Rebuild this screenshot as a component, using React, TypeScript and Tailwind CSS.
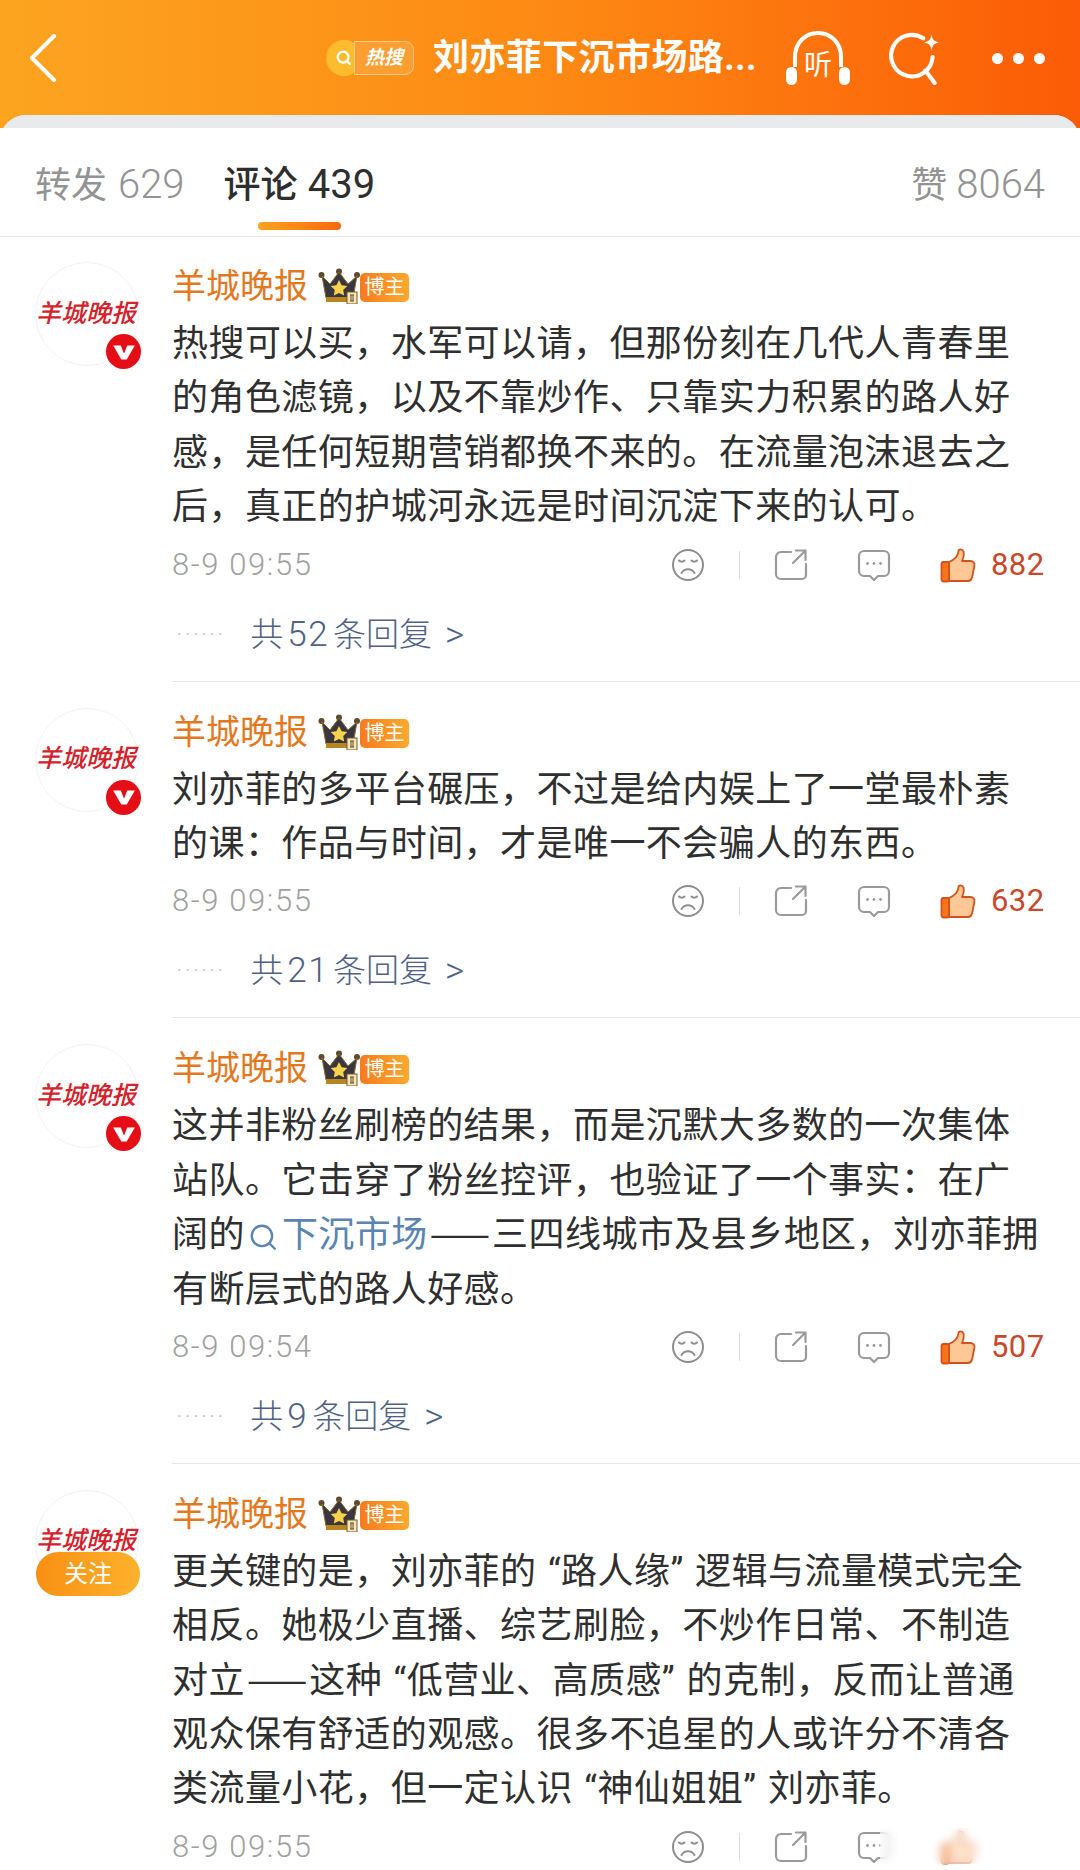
const FONT = "font-['Roboto','Noto_Sans_CJK_SC',sans-serif]";

type CommentData = {
  lines: React.ReactNode[];
  time: string;
  likes: string;
  replies?: string;
  follow?: boolean;
};

function SearchLink({ text }: { text: string }) {
  return (
    <span className="text-[#5b84b1]">
      <svg viewBox="0 0 28 28" className="inline-block w-[30px] h-[30px] ml-[3px] mr-[4px] mb-[2px] align-middle" fill="none" stroke="#5b84b1" strokeWidth="2.2" strokeLinecap="round">
        <circle cx="13" cy="13" r="9.5" />
        <path d="M20 20l5 5" />
      </svg>
      {text}
    </span>
  );
}

function Dash() {
  return <span className="font-['Noto_Sans_CJK_SC'] tracking-normal leading-none mx-[2px]">——</span>;
}

const comments: CommentData[] = [
  {
    lines: [
      "热搜可以买，水军可以请，但那份刻在几代人青春里",
      "的角色滤镜，以及不靠炒作、只靠实力积累的路人好",
      "感，是任何短期营销都换不来的。在流量泡沫退去之",
      "后，真正的护城河永远是时间沉淀下来的认可。",
    ],
    time: "8-9 09:55",
    likes: "882",
    replies: "52",
  },
  {
    lines: [
      "刘亦菲的多平台碾压，不过是给内娱上了一堂最朴素",
      "的课：作品与时间，才是唯一不会骗人的东西。",
    ],
    time: "8-9 09:55",
    likes: "632",
    replies: "21",
  },
  {
    lines: [
      "这并非粉丝刷榜的结果，而是沉默大多数的一次集体",
      "站队。它击穿了粉丝控评，也验证了一个事实：在广",
      <>
        阔的<SearchLink text="下沉市场" /><Dash />三四线城市及县乡地区，刘亦菲拥
      </>,
      "有断层式的路人好感。",
    ],
    time: "8-9 09:54",
    likes: "507",
    replies: "9",
  },
  {
    lines: [
      "更关键的是，刘亦菲的 “路人缘” 逻辑与流量模式完全",
      "相反。她极少直播、综艺刷脸，不炒作日常、不制造",
      <>
        对立<Dash />这种 “低营业、高质感” 的克制，反而让普通
      </>,
      "观众保有舒适的观感。很多不追星的人或许分不清各",
      "类流量小花，但一定认识 “神仙姐姐” 刘亦菲。",
    ],
    time: "8-9 09:55",
    likes: "",
    follow: true,
  },
];

function Avatar({ follow }: { follow?: boolean }) {
  return (
    <div className="relative w-[104px] h-[104px] shrink-0 rounded-full border border-[#f2f2f2] flex items-center justify-center">
      <span className="text-[#d3222c] text-[25px] leading-none font-medium italic whitespace-nowrap -mt-[2px] -ml-[2px]">
        羊城晚报
      </span>
      {follow ? (
        <div className="absolute left-0 top-[61px] w-[104px] h-[44px] rounded-full bg-gradient-to-r from-[#f98f12] to-[#fcb22c] text-white text-[24px] leading-[44px] text-center">
          关注
        </div>
      ) : (
        <div className="absolute right-[-3px] bottom-[-4px] w-[35px] h-[35px] rounded-full bg-[#e60e16] flex items-center justify-center">
          <svg viewBox="0 0 24 24" className="w-[26px] h-[26px]" fill="#fff">
            <path d="M2 6h7l3 7.500L15 6h7l-7.500 13h-5z" />
          </svg>
        </div>
      )}
    </div>
  );
}

function Crown() {
  return (
    <svg viewBox="0 0 44 36" className="w-[44px] h-[36px] shrink-0">
      <circle cx="3.5" cy="7" r="3" fill="#5e4a2c" />
      <circle cx="21" cy="3.5" r="3" fill="#5e4a2c" />
      <circle cx="39" cy="7" r="3" fill="#5e4a2c" />
      <path d="M4 8l8 8 9-12 9 12 9-8-4 22H8z" fill="#3a3640" stroke="#8a6a2a" strokeWidth="1" />
      <rect x="8" y="29" width="28" height="5" fill="#b9851f" />
      <path d="M21 12l2.6 5.2 5.7.8-4.1 4 1 5.6-5.2-2.7-5.2 2.7 1-5.6-4.1-4 5.7-.8z" fill="#f7d24b" />
      <rect x="29" y="24" width="10" height="12" fill="#f3e6c0" stroke="#7a5a1c" />
      <path d="M32 27h4M32 33h4M33 27v6M35 27v6" stroke="#6b4c16" strokeWidth="1" />
    </svg>
  );
}

function NameRow() {
  return (
    <div className="flex items-center h-[36px]">
      <span className="text-[34px] leading-[36px] text-[#e3791f] whitespace-nowrap">羊城晚报</span>
      <div className="flex items-center ml-[10px]">
        <Crown />
        <span className="-ml-[2px] mt-[3px] w-[49px] h-[29px] rounded-[5px] bg-gradient-to-r from-[#f77b1d] to-[#fba92e] text-white text-[20px] leading-[29px] text-center">
          博主
        </span>
      </div>
    </div>
  );
}

function SadIcon() {
  return (
    <svg viewBox="0 0 34 34" className="w-[34px] h-[34px]" fill="none" stroke="#8e8e8e" strokeWidth="2" strokeLinecap="round">
      <circle cx="17" cy="17" r="15" />
      <path d="M8 12.5c1.5 1.5 4 1.5 5.5 0M20.5 12.5c1.5 1.5 4 1.5 5.5 0M10.5 25c3-5 10-5 13 0" />
    </svg>
  );
}

function ShareIcon() {
  return (
    <svg viewBox="0 0 34 34" className="w-[34px] h-[34px]" fill="none" stroke="#9a9a9a" strokeWidth="2.2" strokeLinecap="round" strokeLinejoin="round">
      <path d="M17 4H7a5 5 0 0 0-5 5v17a5 5 0 0 0 5 5h21a4 4 0 0 0 4-4V16" />
      <path d="M19 15L31 3M22 2.5h9.5V12" />
    </svg>
  );
}

function ChatIcon() {
  return (
    <svg viewBox="0 0 34 34" className="w-[34px] h-[34px]" fill="none" stroke="#9a9a9a" strokeWidth="2.2" strokeLinejoin="round">
      <path d="M7 3h20a5 5 0 0 1 5 5v15a5 5 0 0 1-5 5h-6l-4 4-4-4H7a5 5 0 0 1-5-5V8a5 5 0 0 1 5-5z" />
      <circle cx="10.5" cy="15.5" r="1.4" fill="#9a9a9a" stroke="none" />
      <circle cx="17" cy="15.5" r="1.4" fill="#9a9a9a" stroke="none" />
      <circle cx="23.5" cy="15.5" r="1.4" fill="#9a9a9a" stroke="none" />
    </svg>
  );
}

function ThumbIcon() {
  return (
    <svg viewBox="0 0 36 36" className="w-[36px] h-[36px]" strokeLinejoin="round">
      <path d="M9 15c5-2 9-6 9.500-11 .2-2 4-2.500 5 .5.8 3-.2 6.500-1.500 9.500h8.500c2.500 0 4.500 2 4 4.500l-2.500 12c-.5 2.200-2 3.500-4 3.500H9z" fill="#fdc796" stroke="#d4511c" strokeWidth="1.800" />
      <rect x="1.500" y="15" width="7.500" height="19.500" rx="2" fill="#f7761a" stroke="#d4511c" strokeWidth="1.800" />
    </svg>
  );
}

function ActionRow({ time, likes }: { time: string; likes: string }) {
  return (
    <div className="flex items-center h-[36px] mt-[12px] pr-[35px]">
      <span className="text-[31px] leading-[36px] font-light text-[#a0a0a0] tracking-[1.6px]">{time}</span>
      <div className="ml-auto flex items-center">
        <SadIcon />
        <span className="w-px h-[28px] bg-[#dcdcdc] ml-[34px] mr-[34px]" />
        <ShareIcon />
        <span className="ml-[49px]"><ChatIcon /></span>
        <span className="ml-[49px]"><ThumbIcon /></span>
        <span className="ml-[15px] min-w-[54px] text-[31px] leading-[36px] text-[#c8482c] tracking-[0.4px]">{likes}</span>
      </div>
    </div>
  );
}

function Comment({ data, first }: { data: CommentData; first: boolean }) {
  return (
    <div className={`flex pl-[35px] ${first ? "pt-[25px]" : "pt-[26px]"}`}>
      <Avatar follow={data.follow} />
      <div className="ml-[33px] flex-1 min-w-0">
        <div className="pt-[6px]">
          <NameRow />
        </div>
        <div className="mt-[13px] text-[36px] leading-[54.4px] text-[#2f2f2f] tracking-[0.45px] [word-spacing:2px] whitespace-nowrap">
          {data.lines.map((line, i) => (
            <div key={i} className="h-[54.4px]">{line}</div>
          ))}
        </div>
        <ActionRow time={data.time} likes={data.likes} />
        {data.replies && (
          <>
            <div className="flex items-center h-[40px] mt-[32px]">
              <span className="text-[18px] leading-none tracking-[3.5px] text-[#c8c8c8] ml-[5px]">······</span>
              <span className="ml-[24px] flex items-center text-[33px] leading-[40px] text-[#4f6285] font-light">
                共<span className="mx-[4px] text-[35px] tracking-[1.5px]">{data.replies}</span>条回复<span className="ml-[13px] text-[37px]">&gt;</span>
              </span>
            </div>
            <div className="mt-[26px] h-px bg-[#e8e8e8]" />
          </>
        )}
      </div>
    </div>
  );
}

function Header() {
  return (
    <div className="bg-gradient-to-r from-[#fca420] via-[#fd8a14] to-[#fb5b06] h-[128px]">
      <div className="flex items-center h-[115px] pl-[29px] pr-[35px]">
        <svg viewBox="0 0 28 48" className="w-[28px] h-[48px] shrink-0" fill="none" stroke="#fff" strokeWidth="4" strokeLinecap="round" strokeLinejoin="round">
          <path d="M25 2L3 24l22 22" />
        </svg>
        <div className="ml-[267px] flex items-center shrink-0">
          <div className="relative w-[92px] h-[38px]">
            <div className="absolute left-[2px] top-[1px] w-[36px] h-[36px] rounded-full bg-[#fdbb2e] flex items-center justify-center">
              <svg viewBox="0 0 20 20" className="w-[18px] h-[18px]" fill="none" stroke="#fff" strokeWidth="2.500" strokeLinecap="round">
                <circle cx="9" cy="9" r="6" />
                <path d="M13.500 13.500l3 3" />
              </svg>
            </div>
            <div className="absolute left-[30px] top-[2px] w-[60px] h-[34px] rounded-r-[9px] border border-[#fcc988] bg-[#fb9f32] text-white text-[19px] leading-[32px] font-bold italic text-center">
              热搜
            </div>
          </div>
          <span className="ml-[17px] text-white text-[36px] leading-[40px] font-bold tracking-[0.4px] whitespace-nowrap">刘亦菲下沉市场路...</span>
        </div>
        <svg viewBox="0 0 66 58" className="ml-[28px] w-[66px] h-[58px] shrink-0" fill="none">
          <path d="M10 38V28C10 14 20 4 33 4s23 10 23 24v10" stroke="#fff" strokeWidth="4" />
          <rect x="1" y="38" width="11" height="18" rx="5.500" fill="#fff" />
          <rect x="54" y="38" width="11" height="18" rx="5.500" fill="#fff" />
          <text x="33" y="46" textAnchor="middle" fontSize="28" fill="#fff" fontFamily="Noto Sans CJK SC">听</text>
        </svg>
        <svg viewBox="0 0 52 52" className="ml-[38px] w-[54px] h-[54px] shrink-0" fill="none" stroke="#fff" strokeWidth="4" strokeLinecap="round">
          <path d="M33 7a20 20 0 1 0 9 18" />
          <path d="M35 38l9 12" />
          <path d="M41 3c.6 5 2 7 7 8-5 1-6.400 3-7 8-.6-5-2-7-7-8 5-1 6.400-3 7-8z" fill="#fff" stroke="none" />
        </svg>
        <div className="ml-auto flex gap-[10px] shrink-0 mt-[2px]">
          <span className="w-[11px] h-[11px] rounded-full bg-white" />
          <span className="w-[11px] h-[11px] rounded-full bg-white" />
          <span className="w-[11px] h-[11px] rounded-full bg-white" />
        </div>
      </div>
    </div>
  );
}

export default function App() {
  return (
    <div className={`relative w-[1080px] h-[1870px] overflow-hidden bg-white ${FONT}`}>
      <Header />
      {/* rounded sheet sits over the header */}
      <div className="relative -mt-[13px] rounded-t-[26px] bg-white overflow-hidden">
        <div className="h-[13px] bg-[#e9eaec]" />
        <div className="relative flex items-center h-[109px] border-b border-[#e6e6e6] pt-[7px] pl-[35px] pr-[35px] text-[36px] leading-[44px]">
          <span className="text-[#939393]">转发 <span className="ml-[2px] text-[40px] font-light">629</span></span>
          <span className="ml-[39px] text-[37px] text-[#2e2e2e] font-medium">评论 <span className="ml-[1px] text-[40px] font-normal">439</span></span>
          <span className="ml-auto text-[#939393]">赞 <span className="text-[40px] font-light">8064</span></span>
          <div className="absolute left-[258px] bottom-[6px] w-[83px] h-[8px] rounded-full bg-gradient-to-r from-[#fba31c] to-[#f9670e]" />
        </div>
        {comments.map((c, i) => (
          <Comment key={i} data={c} first={i === 0} />
        ))}
      </div>
      {/* blurred watermark strip */}
      <div className="absolute left-[880px] top-[1828px] w-[190px] h-[36px] backdrop-blur-[5px] bg-white/50" />
    </div>
  );
}
